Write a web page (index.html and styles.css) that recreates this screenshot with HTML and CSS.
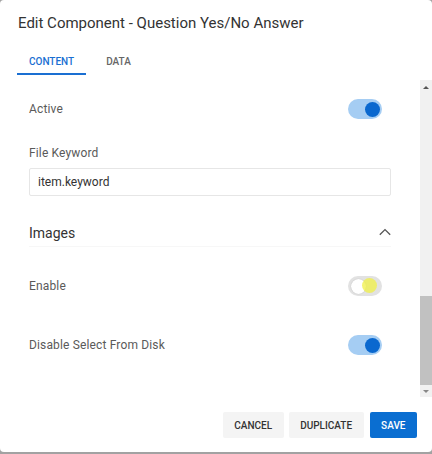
FILE: index.html
```html
<!DOCTYPE html>
<html>
<head>
<meta charset="utf-8">
<link rel="stylesheet" href="styles.css">
</head>
<body>
<div class="dialog">
  <div class="header">
    <div class="title">Edit Component - Question Yes/No Answer</div>
    <div class="tabs">
      <div class="tab active">CONTENT</div>
      <div class="tab tab-data">DATA</div>
    </div>
  </div>
  <div class="body">
    <div class="content">
      <div class="row row-active">
        <span class="label">Active</span>
        <span class="toggle on"><span class="knob"></span></span>
      </div>
      <div class="field-label">File Keyword</div>
      <div class="input">item.keyword</div>
      <div class="section-head">
        <span class="section-title">Images</span>
        <svg class="chevron" width="12" height="8" viewBox="0 0 12 8"><path d="M0.8 6.8 L6 1.6 L11.2 6.8" fill="none" stroke="#555" stroke-width="1.3"/></svg>
      </div>
      <div class="row row-enable">
        <span class="label">Enable</span>
        <span class="toggle off"><span class="knob"></span><span class="cursor-hl"></span></span>
      </div>
      <div class="row row-disable">
        <span class="label">Disable Select From Disk</span>
        <span class="toggle on"><span class="knob"></span></span>
      </div>
    </div>
    <div class="scrollbar">
      <div class="arrow up"></div>
      <div class="thumb"></div>
      <div class="arrow down"></div>
    </div>
  </div>
  <div class="footer">
    <button class="btn">CANCEL</button>
    <button class="btn">DUPLICATE</button>
    <button class="btn primary">SAVE</button>
  </div>
</div>
</body>
</html>
```
FILE: styles.css
```css
html, body {
  margin: 0;
  padding: 0;
}
body {
  background: #a2a2a2;
  width: 432px;
  height: 454px;
  overflow: hidden;
  font-family: Roboto, "Liberation Sans", sans-serif;
}
.dialog {
  width: 432px;
  height: 452px;
  background: #fff;
  border-radius: 4px;
  display: flex;
  flex-direction: column;
  overflow: hidden;
}
.header {
  padding: 13px 0 0 18px;
}
.title {
  font-size: 15px;
  line-height: 20px;
  color: #333;
}
.tabs {
  display: flex;
  margin-top: 17px;
}
.tab {
  font-size: 10px;
  font-weight: 500;
  line-height: 23px;
  padding: 0 12px;
  color: #666;
  border-bottom: 2px solid transparent;
  height: 23px;
}
.tab.active {
  color: #1a6fd2;
  border-bottom-color: #1a6fd2;
  margin-left: -1px;
}
.tab-data {
  padding-left: 20px;
}
.body {
  height: 317px;
  margin-top: 5px;
  display: flex;
}
.content {
  flex: 1;
  padding: 0 29px;
  overflow: hidden;
}
.row {
  display: flex;
  align-items: center;
  justify-content: space-between;
  height: 20px;
}
.row-active { margin-top: 19px; }
.row-enable { margin-top: 29px; }
.row-disable { margin-top: 39px; }
.label {
  font-size: 12px;
  color: #5a5a5a;
  letter-spacing: 0.15px;
}
.field-label {
  font-size: 12px;
  line-height: 16px;
  color: #5a5a5a;
  margin-top: 26px;
  letter-spacing: 0.15px;
}
.input {
  margin-top: 7px;
  height: 26px;
  border: 1px solid #e6e6e6;
  border-radius: 2px;
  font-size: 12px;
  line-height: 26px;
  padding-left: 8px;
  color: #333;
}
.section-head {
  margin-top: 27px;
  height: 20px;
  padding-bottom: 3px;
  border-bottom: 1px solid #f7f7f7;
  display: flex;
  align-items: center;
  justify-content: space-between;
}
.section-title {
  font-size: 14px;
  color: #333;
}
.chevron {
  display: block;
  margin-top: -2px;
}
.toggle {
  position: relative;
  width: 34px;
  height: 20px;
  border-radius: 10px;
  margin-right: 9px;
  display: flex;
  align-items: center;
}
.toggle.on {
  background: #a5cdf3;
  justify-content: flex-end;
}
.toggle.on .knob {
  width: 15px;
  height: 15px;
  border-radius: 50%;
  background: #0a68cf;
  margin-right: 2px;
}
.toggle.off {
  background: #e2e2e2;
}
.toggle.off .knob {
  width: 15px;
  height: 15px;
  border-radius: 50%;
  background: #fff;
  margin-left: 3px;
  box-shadow: 0 0 1px rgba(0,0,0,0.25);
}
.cursor-hl {
  position: absolute;
  left: 14px;
  top: 2px;
  width: 15px;
  height: 15px;
  border-radius: 50%;
  background: rgba(240, 240, 70, 0.75);
}
.scrollbar {
  width: 12px;
  background: #f1f1f1;
  display: flex;
  flex-direction: column;
  align-items: center;
}
.arrow {
  width: 0;
  height: 0;
  border-left: 3px solid transparent;
  border-right: 3px solid transparent;
}
.arrow.up {
  border-bottom: 3px solid #555;
  margin-top: 6px;
}
.arrow.down {
  border-top: 3px solid #888;
  margin-top: 5px;
}
.thumb {
  width: 12px;
  height: 89px;
  background: #c1c1c1;
  margin-top: 207px;
}
.footer {
  display: flex;
  justify-content: flex-end;
  gap: 5px;
  padding: 15px 15px 0 0;
}
.btn {
  font-family: Roboto, "Liberation Sans", sans-serif;
  font-size: 10px;
  font-weight: 500;
  height: 26px;
  padding: 0 11.5px;
  border: none;
  border-radius: 2px;
  background: #f4f4f4;
  color: #333;
}
.btn.primary {
  background: #0a6ed1;
  color: #fff;
  margin-left: 1px;
}
```
